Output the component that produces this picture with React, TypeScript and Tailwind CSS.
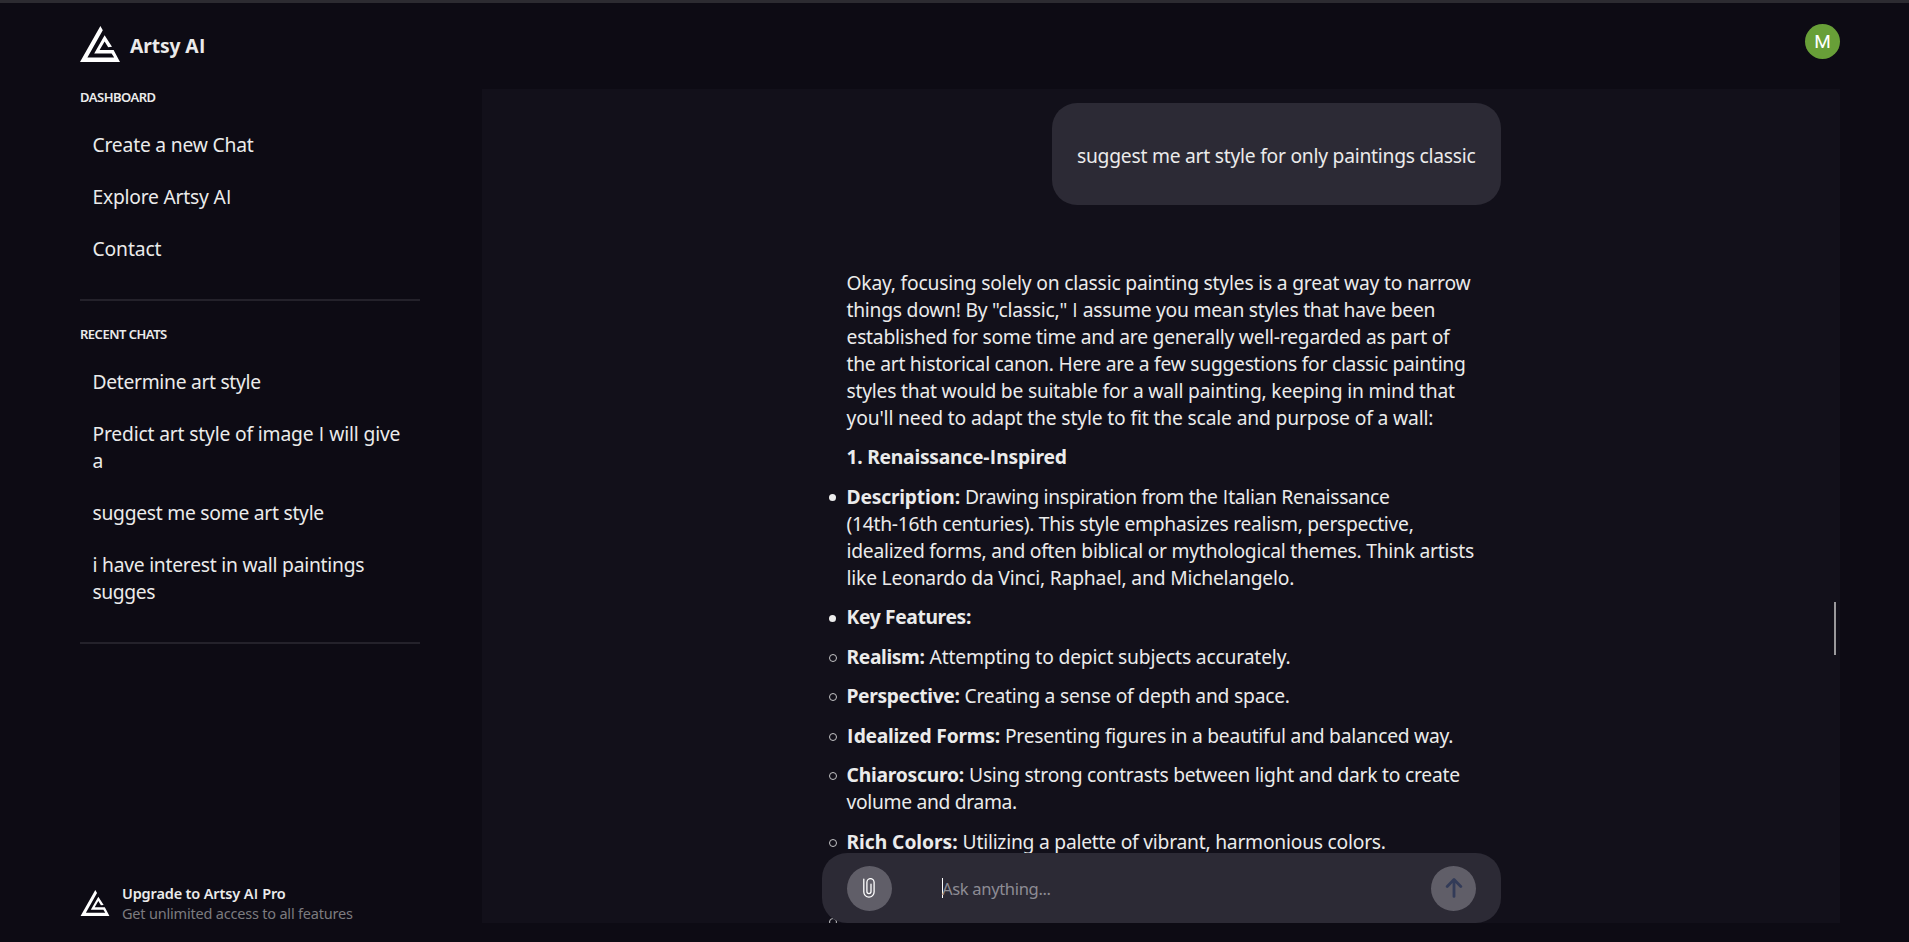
import { Fragment } from "react";

type TextLine = { text: string; tracking: string };
type Item = { marker: "disc" | "circle"; label: string; labelTracking: string; lines: TextLine[] };

const navLinks: TextLine[] = [
  { text: "Create a new Chat", tracking: "tracking-[-0.19px]" },
  { text: "Explore Artsy AI", tracking: "tracking-[-0.22px]" },
  { text: "Contact", tracking: "tracking-[-0.1px]" },
];

const recentChats: TextLine[][] = [
  [{ text: "Determine art style", tracking: "tracking-[-0.3px]" }],
  [
    { text: "Predict art style of image I will give", tracking: "tracking-[-0.17px]" },
    { text: "a", tracking: "tracking-[-0.2px]" },
  ],
  [{ text: "suggest me some art style", tracking: "tracking-[-0.26px]" }],
  [
    { text: "i have interest in wall paintings", tracking: "tracking-[-0.24px]" },
    { text: "sugges", tracking: "tracking-[-0.4px]" },
  ],
];

const intro: TextLine[] = [
  { text: "Okay, focusing solely on classic painting styles is a great way to narrow", tracking: "tracking-[-0.2px]" },
  { text: 'things down! By "classic," I assume you mean styles that have been', tracking: "tracking-[-0.24px]" },
  { text: "established for some time and are generally well-regarded as part of", tracking: "tracking-[-0.23px]" },
  { text: "the art historical canon. Here are a few suggestions for classic painting", tracking: "tracking-[-0.26px]" },
  { text: "styles that would be suitable for a wall painting, keeping in mind that", tracking: "tracking-[-0.21px]" },
  { text: "you'll need to adapt the style to fit the scale and purpose of a wall:", tracking: "tracking-[-0.15px]" },
];

const items: Item[] = [
  {
    marker: "disc",
    label: "Description:",
    labelTracking: "tracking-[-0.2px]",
    lines: [
      { text: "Drawing inspiration from the Italian Renaissance", tracking: "tracking-[-0.32px]" },
      { text: "(14th-16th centuries). This style emphasizes realism, perspective,", tracking: "tracking-[-0.27px]" },
      { text: "idealized forms, and often biblical or mythological themes. Think artists", tracking: "tracking-[-0.24px]" },
      { text: "like Leonardo da Vinci, Raphael, and Michelangelo.", tracking: "tracking-[-0.19px]" },
    ],
  },
  { marker: "disc", label: "Key Features:", labelTracking: "tracking-[-0.36px]", lines: [] },
  {
    marker: "circle",
    label: "Realism:",
    labelTracking: "tracking-[-0.37px]",
    lines: [{ text: "Attempting to depict subjects accurately.", tracking: "tracking-[-0.16px]" }],
  },
  {
    marker: "circle",
    label: "Perspective:",
    labelTracking: "tracking-[-0.36px]",
    lines: [{ text: "Creating a sense of depth and space.", tracking: "tracking-[-0.22px]" }],
  },
  {
    marker: "circle",
    label: "Idealized Forms:",
    labelTracking: "tracking-[-0.24px]",
    lines: [{ text: "Presenting figures in a beautiful and balanced way.", tracking: "tracking-[-0.25px]" }],
  },
  {
    marker: "circle",
    label: "Chiaroscuro:",
    labelTracking: "tracking-[-0.22px]",
    lines: [
      { text: "Using strong contrasts between light and dark to create", tracking: "tracking-[-0.24px]" },
      { text: "volume and drama.", tracking: "tracking-[-0.32px]" },
    ],
  },
  {
    marker: "circle",
    label: "Rich Colors:",
    labelTracking: "tracking-[-0.05px]",
    lines: [{ text: "Utilizing a palette of vibrant, harmonious colors.", tracking: "tracking-[-0.23px]" }],
  },
  { marker: "circle", label: "", labelTracking: "", lines: [] },
  { marker: "circle", label: "", labelTracking: "", lines: [] },
];

/* Noto Sans draws a serifed capital I; Open Sans supplies the plain stem. */
function T({ children }: { children: string }) {
  const parts = children.split("I");
  return (
    <>
      {parts.map((p, i) => (
        <Fragment key={i}>
          {i > 0 && <span className="px-[0.5px] font-['Open_Sans',sans-serif] leading-[0]">I</span>}
          {p}
        </Fragment>
      ))}
    </>
  );
}

function Logo({ className }: { className: string }) {
  return (
    <svg viewBox="0 0 40 36" className={className} fill="#fff" aria-hidden="true">
      <path d="M20.4 0 L22.8 4.2 L7.4 31.6 H34.2 L31.6 27.5 H14.2 L24.6 9.2 L32 20.8 L28.2 21.2 L24.6 15.4 L19.6 24 H33.6 L40 36 H0 Z" />
    </svg>
  );
}

function Divider() {
  return <div className="h-0.5 w-[340px] shrink-0 bg-[#24222b]" />;
}

function Marker({ kind }: { kind: "disc" | "circle" }) {
  return (
    <span className="flex h-[27px] w-[25px] shrink-0 items-center pl-[7px] pt-[3px]">
      {kind === "disc" ? (
        <span className="size-[7px] rounded-full bg-[#ececec]" />
      ) : (
        <span className="size-2 rounded-full border border-[#c4c4c6]" />
      )}
    </span>
  );
}

function Lines({ lines }: { lines: TextLine[] }) {
  return (
    <>
      {lines.map((l) => (
        <span key={l.text} className={`block ${l.tracking}`}>
          <T>{l.text}</T>
        </span>
      ))}
    </>
  );
}

function Sidebar() {
  return (
    <aside className="flex w-[402px] shrink-0 flex-col">
      <h2 className="mt-[-2px] h-5 text-[13px] leading-5 font-semibold tracking-[-0.5px]">DASHBOARD</h2>
      <nav className="mt-6 flex flex-col gap-[25px] pl-[12.5px]">
        {navLinks.map((l) => (
          <a key={l.text} className={l.tracking}>
            <T>{l.text}</T>
          </a>
        ))}
      </nav>
      <div className="mt-[37px]">
        <Divider />
      </div>
      <h2 className="mt-[23px] h-5 text-[13px] leading-5 font-semibold tracking-[-0.5px]">RECENT CHATS</h2>
      <nav className="mt-6 flex flex-col gap-[25px] pl-[12.5px]">
        {recentChats.map((c) => (
          <a key={c[0].text}>
            <Lines lines={c} />
          </a>
        ))}
      </nav>
      <div className="mt-[37px]">
        <Divider />
      </div>
      <div className="mt-auto flex items-center gap-3">
        <Logo className="h-[26px] w-[30px]" />
        <div className="text-[14.5px] leading-5">
          <p className="font-semibold tracking-[-0.15px]">
            <T>Upgrade to Artsy AI Pro</T>
          </p>
          <p className="tracking-[-0.2px] text-[#7c7b7f]">Get unlimited access to all features</p>
        </div>
      </div>
    </aside>
  );
}

function Composer() {
  return (
    <form className="absolute bottom-0 left-[340px] flex h-[70px] w-[679px] items-center rounded-[25px] bg-[#2c2a35] px-[25px]">
      <button type="button" className="flex size-[45px] items-center justify-center rounded-full bg-[#605e68]">
        <svg viewBox="0 0 12 20" className="mr-px h-5 w-3" fill="none" stroke="#fff" strokeWidth="1.3" strokeLinecap="round">
          <path d="M.8 1.2V14a5.1 5.1 0 0 0 10.3 0V4.2a3.6 3.6 0 0 0-7.2 0v9.4a2 2 0 0 0 4.1 0V6.2" />
        </svg>
      </button>
      <div className="ml-[50px] flex h-5 flex-1 items-center">
        <span className="h-5 w-px bg-white" />
        <span className="-ml-px text-[16.6px] tracking-[-0.36px] text-[#8d8c94]">Ask anything...</span>
      </div>
      <button type="button" className="flex size-[45px] items-center justify-center rounded-full bg-[#605e68]">
        <svg viewBox="0 0 18 20" className="h-5 w-[18px]" fill="none" stroke="#323b58" strokeWidth="2.8" strokeLinecap="round" strokeLinejoin="round">
          <path d="M9 18.4V1.8M2.2 8.4L9 1.6l6.8 6.8" />
        </svg>
      </button>
    </form>
  );
}

function Chat() {
  return (
    <section className="relative h-[834px] w-[1358px] shrink-0 overflow-hidden bg-[#12101a]">
      <div className="mx-auto flex w-[679px] flex-col pt-[14px]">
        <div className="flex h-[102px] items-center self-end rounded-[25px] bg-[#2c2a35] px-[25px] whitespace-nowrap">
          <p className="pt-[3px] tracking-[-0.24px]">suggest me art style for only paintings classic</p>
        </div>
        <div className="mt-[63.8px] flex flex-col gap-[12.5px] whitespace-nowrap">
          <p className="pl-[25px]">
            <Lines lines={intro} />
          </p>
          <h3 className="pl-[25px] font-bold tracking-[-0.24px]">
            <T>1. Renaissance-Inspired</T>
          </h3>
          {items.map((it, i) => (
            <div key={i} className="flex">
              <Marker kind={it.marker} />
              <div>
                <div>
                  <b className={it.labelTracking}>
                    <T>{it.label}</T>
                  </b>{" "}
                  {it.lines[0] && (
                    <span className={it.lines[0].tracking}>
                      <T>{it.lines[0].text}</T>
                    </span>
                  )}
                </div>
                <Lines lines={it.lines.slice(1)} />
              </div>
            </div>
          ))}
        </div>
      </div>
      <div className="absolute top-[513px] right-1 h-[53px] w-0.5 bg-[#9a999c]" />
      <Composer />
    </section>
  );
}

export default function App() {
  return (
    <div className="flex h-[942px] w-[1909px] flex-col overflow-hidden border-t-[3px] border-[#2c2b31] bg-[#0d0b14] px-20 font-['Noto_Sans',sans-serif] text-[19.25px] leading-[27px] text-[#ebebeb]">
      <header className="flex h-[86px] w-[1760px] shrink-0 items-start justify-between">
        <div className="flex items-center gap-2.5 pt-[23px]">
          <Logo className="h-9 w-10" />
          <h1 className="pt-[3px] font-bold tracking-[-0.1px]">
            <T>Artsy AI</T>
          </h1>
        </div>
        <div className="mt-[21px] flex size-[35px] items-center justify-center rounded-full bg-[#689f38] font-[Roboto,sans-serif] text-[19px] text-white">
          M
        </div>
      </header>
      <main className="flex h-[834px]">
        <Sidebar />
        <Chat />
      </main>
    </div>
  );
}
